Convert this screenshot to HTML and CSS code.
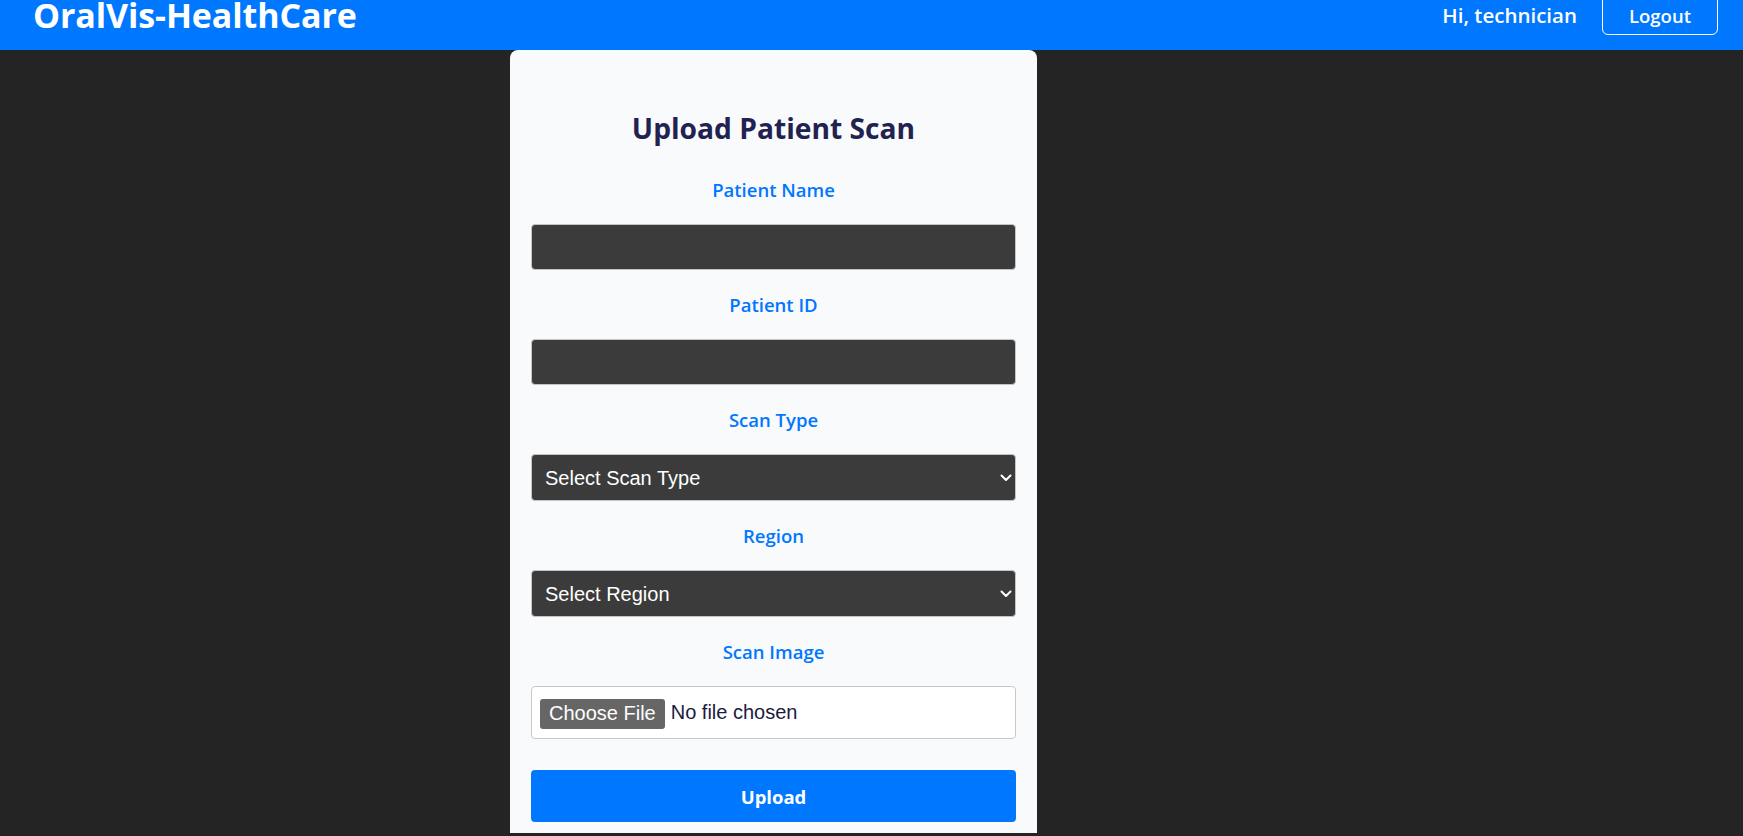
FILE: index.html
```html
<!DOCTYPE html>
<html lang="en">
<head>
<meta charset="utf-8">
<title>OralVis-HealthCare</title>
<link rel="stylesheet" href="styles.css">
</head>
<body>
<header class="topbar">
  <h1 class="brand">OralVis-HealthCare</h1>
  <div class="user">
    <span class="greeting">Hi, technician</span>
    <button class="logout" type="button">Logout</button>
  </div>
</header>
<main class="page">
  <form class="card">
    <h2 class="card-title">Upload Patient Scan</h2>

    <label class="field-label" for="pname">Patient Name</label>
    <input class="field" id="pname" type="text">

    <label class="field-label" for="pid">Patient ID</label>
    <input class="field" id="pid" type="text">

    <label class="field-label" for="stype">Scan Type</label>
    <div class="select-wrap">
      <select class="field select" id="stype">
        <option>Select Scan Type</option>
      </select>
      <svg class="chev" viewBox="0 0 12 8" width="12" height="8"><path d="M1.5 1.5 L6 6 L10.5 1.5" fill="none" stroke="#fff" stroke-width="2" stroke-linecap="round" stroke-linejoin="round"/></svg>
    </div>

    <label class="field-label" for="region">Region</label>
    <div class="select-wrap">
      <select class="field select" id="region">
        <option>Select Region</option>
      </select>
      <svg class="chev" viewBox="0 0 12 8" width="12" height="8"><path d="M1.5 1.5 L6 6 L10.5 1.5" fill="none" stroke="#fff" stroke-width="2" stroke-linecap="round" stroke-linejoin="round"/></svg>
    </div>

    <label class="field-label" for="scan">Scan Image</label>
    <input class="file-field" id="scan" type="file">

    <button class="submit" type="submit">Upload</button>
  </form>
</main>
</body>
</html>
```

FILE: styles.css
```css
* { box-sizing: border-box; }

html, body {
  margin: 0;
  padding: 0;
  height: 100%;
  overflow: hidden;
}

body {
  background: #242424;
  font-family: "Open Sans", "Noto Sans", sans-serif;
}

.topbar {
  height: 50px;
  background: #0077ff;
  display: flex;
  align-items: center;
  justify-content: space-between;
  padding: 0 25px 20px 33px;
}

.brand {
  margin: 0;
  color: #fff;
  font-size: 34px;
  font-weight: 700;
  line-height: 30px;
  letter-spacing: -0.1px;
}

.user {
  display: flex;
  align-items: center;
  gap: 25px;
}

.greeting {
  color: #fff;
  font-size: 20.5px;
  font-weight: 600;
}

.logout {
  height: 40px;
  width: 116px;
  background: transparent;
  border: 1px solid #fff;
  border-radius: 6px;
  color: #fff;
  font-family: "Open Sans", "Noto Sans", sans-serif;
  font-size: 18.5px;
  font-weight: 600;
  padding: 0;
}

.page {
  padding-left: 510px;
}

.card {
  width: 527px;
  background: #f9fafc;
  border-radius: 8px 8px 0 0;
  padding: 20px 21px 11px;
  display: flex;
  flex-direction: column;
  align-items: stretch;
  height: 783px;
}

.card-title {
  margin: 40px 0 32px;
  text-align: center;
  color: #222250;
  font-size: 28.2px;
  font-weight: 700;
  line-height: 36px;
}

.field-label {
  display: block;
  text-align: center;
  color: #0077ff;
  font-size: 18.5px;
  font-weight: 600;
  line-height: 24px;
  margin-bottom: 22px;
}

.field {
  display: block;
  width: 100%;
  height: 46px;
  margin: 0 0 23px;
  background: #3b3b3b;
  border: 1px solid #c4c4c4;
  border-radius: 4px;
  color: #fff;
  font-family: "Liberation Sans", Arial, sans-serif;
  font-size: 20px;
  padding: 0 13px;
}

.select-wrap {
  position: relative;
}

.select {
  appearance: none;
  -webkit-appearance: none;
  height: 47px;
  padding-left: 13px;
}

.chev {
  position: absolute;
  right: 4px;
  top: 20px;
  pointer-events: none;
}

.file-field {
  display: block;
  width: 100%;
  height: 53px;
  margin: 0 0 31px;
  background: #fff;
  border: 1px solid #c8c8c8;
  border-radius: 4px;
  padding: 0 8px;
  color: #1b1b3f;
  font-family: "Liberation Sans", Arial, sans-serif;
  font-size: 20px;
  line-height: 51px;
}

.file-field::file-selector-button {
  height: 30px;
  background: #666;
  color: #fff;
  border: none;
  border-radius: 3px;
  padding: 0 9px;
  margin: 0 6px 0 0;
  font-family: "Liberation Sans", Arial, sans-serif;
  font-size: 20px;
  vertical-align: middle;
}

.submit {
  height: 52px;
  width: 100%;
  background: #0077ff;
  border: none;
  border-radius: 4px;
  color: #fff;
  font-family: "Open Sans", "Noto Sans", sans-serif;
  font-size: 18.5px;
  font-weight: 700;
}
```
